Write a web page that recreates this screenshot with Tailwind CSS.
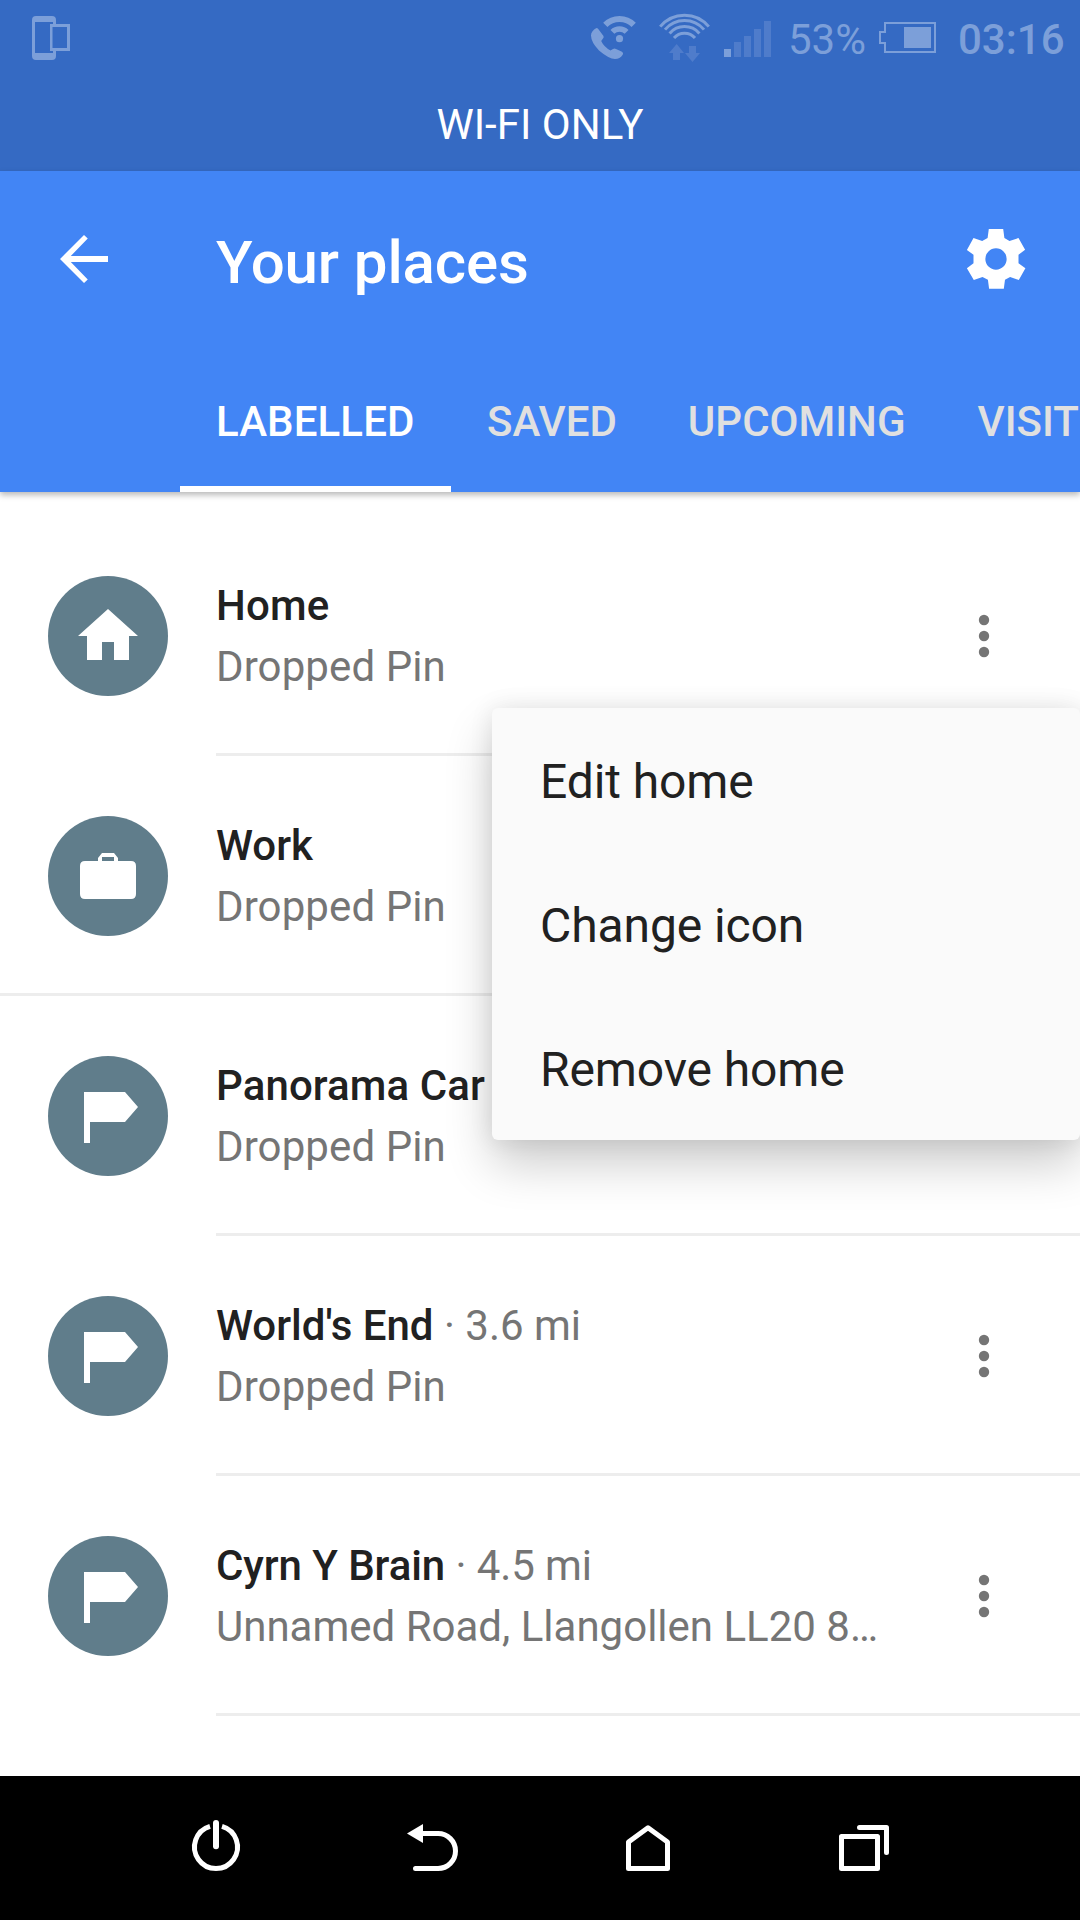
<!DOCTYPE html>
<html lang="en">
<head>
<meta charset="utf-8">
<title>Your places</title>
<script src="https://cdn.jsdelivr.net/npm/@tailwindcss/browser@4"></script>
</head>
<body class="bg-white">
<svg class="hidden">
  <symbol id="flag" viewBox="0 0 72 72"><path d="M12 12H53L66 27L53 42H18V63H12Z"/></symbol>
  <symbol id="more" viewBox="0 0 24 48"><circle cx="12" cy="8" r="5.2"/><circle cx="12" cy="24" r="5.2"/><circle cx="12" cy="40" r="5.2"/></symbol>
</svg>
<div class="relative flex h-[1920px] w-[1080px] flex-col overflow-hidden bg-white font-['Roboto',sans-serif] text-[42px] text-[#212121]">

  <!-- Status bar -->
  <div class="h-[171px] shrink-0 bg-[#356ac3] text-[#7c9fd9]">
    <div class="flex h-[76px] items-center">
      <svg class="ml-[32px] h-[76px] w-[38px]" viewBox="32 0 38 76" fill="currentColor">
        <path fill-rule="evenodd" d="M36 16H52Q56 16 56 20V24H70V51H56V56Q56 60 52 60H36Q32 60 32 56V20Q32 16 36 16ZM35 22V53H53V51H50V24H53V22ZM52.5 27V48H67V27Z"/>
      </svg>
      <svg class="ml-[517px] h-[76px] w-[49px]" viewBox="587 0 49 76" fill="none" stroke="currentColor">
        <path d="M605.3 24.9A20 20 0 0 1 633.7 24.9" stroke-width="6"/>
        <path d="M612.4 31.9A10 10 0 0 1 626.6 31.9" stroke-width="5.4"/>
        <circle cx="619.5" cy="38.7" r="3.6" fill="currentColor" stroke="none"/>
        <path d="M596.5 28Q598 28 599 30L603.5 36Q604 37.5 603 38.5L601.2 41Q604 47 610.5 50.5L613 49Q614.500 48.200 616 49L621.500 51.500Q624 53 622.500 55Q620 59 615 59Q609 59 599 50.500Q591 42 591 35.500Q591 31 596.500 28Z" fill="currentColor" stroke="none"/>
      </svg>
      <svg class="ml-[23px] h-[76px] w-[51px]" viewBox="659 0 51 76" fill="none">
        <g stroke="currentColor" stroke-width="3">
          <path d="M660.200 26.600A31.500 31.500 0 0 1 708.800 26.600"/>
          <path d="M665 29.600A25.500 25.500 0 0 1 704 29.600"/>
          <path d="M669.600 33.500A19.500 19.500 0 0 1 699.400 33.500"/>
          <path d="M674 38A13.800 13.800 0 0 1 695 38"/>
        </g>
        <path d="M676.700 44L684 53H680V60H673V53H669ZM689 46H696V53H700L692.500 62L685 53H689Z" fill="#4f7ccb"/>
      </svg>
      <svg class="ml-[14px] h-[76px] w-[47px]" viewBox="724 0 47 76">
        <path d="M724 49h7v8h-7z" fill="currentColor"/>
        <path d="M734 42h7v15h-7zM744 36h7v21h-7zM754 29h7v28h-7zM764 21h7v36h-7z" fill="#4f7ccb"/>
      </svg>
      <span class="ml-[17px] w-[91px] pt-[3px] leading-[49px]">53%</span>
      <svg class="h-[76px] w-[57px]" viewBox="879 0 57 76">
        <path d="M885 23H935V52H885V43H880V32H885Z" fill="none" stroke="currentColor" stroke-width="2"/>
        <path d="M904 27h27v21h-27z" fill="currentColor"/>
      </svg>
      <span class="ml-[22px] pt-[3px] font-medium leading-[49px]">03:16</span>
    </div>
    <div class="pt-[24px] text-center leading-[50px] text-white">WI-FI ONLY</div>
  </div>

  <!-- App bar with tabs -->
  <header class="z-10 flex h-[321px] shrink-0 flex-col justify-between bg-[#4285f5] text-white shadow-[0_3px_6px_rgba(0,0,0,0.28)]">
    <div class="flex h-[176px] items-center">
      <svg class="ml-[48px] size-[72px]" viewBox="0 0 24 24" fill="currentColor"><path d="M20 11H7.600L13.250 5.200 12 4 4 12 12 20 13.250 18.800 7.600 13H20Z"/></svg>
      <h1 class="ml-[96px] flex-1 pt-[7px] text-[60px] font-medium leading-[70px] tracking-[-0.1px]">Your places</h1>
      <svg class="mr-[48px] size-[72px]" viewBox="0 0 24 24" fill="currentColor"><path fill-rule="evenodd" d="M9.600 2H14.400L14.800 5L16.500 6L19.500 5L21.700 8.900L19.500 10.600V13.400L21.800 15.100L19.600 19L16.700 18L15 18.900L14.600 21.900H9.700L9.300 18.900L7.500 18L4.600 19L2.300 15.100L4.500 13.400V10.600L2.300 9L4.500 5L7.400 6L9.200 5ZM12 8.450A3.550 3.550 0 1 0 12 15.550A3.550 3.550 0 1 0 12 8.450Z"/></svg>
    </div>
    <nav class="flex h-[145px] pl-[180px] font-medium leading-[49px] text-[#e0e0e0]">
      <div class="w-[271px] shrink-0 border-b-[6px] border-white px-[36px] pt-[50px] tracking-[0.1px] text-white">LABELLED</div>
      <div class="-mr-px shrink-0 px-[36px] pt-[50px]">SAVED</div>
      <div class="shrink-0 px-[36px] pt-[50px]">UPCOMING</div>
      <div class="shrink-0 pl-[36px] pt-[50px]">VISIT</div>
    </nav>
  </header>

  <!-- Places -->
  <main class="flex flex-1 flex-col pt-[24px] leading-[61px]">
    <div class="flex h-[240px] shrink-0">
      <div class="w-[216px] pt-[60px] pl-[48px]"><div class="flex size-[120px] items-center justify-center rounded-full bg-[#607d8b]">
        <svg class="size-[72px]" viewBox="0 0 24 24" fill="white"><path d="M10 20v-6h4v6h5v-8h3L12 3 2 12h3v8z"/></svg></div></div>
      <div class="flex flex-1 justify-between border-b-[3px] border-[#ededed] pt-[59px]">
        <div><div class="font-medium tracking-[0.2px]">Home</div><div class="tracking-[0.1px] text-[#757575]">Dropped Pin</div></div>
        <svg class="mt-[37px] mr-[84px] h-[48px] w-[24px]" fill="#757575"><use href="#more"/></svg>
      </div>
    </div>
    <div class="flex h-[240px] shrink-0">
      <div class="w-[216px] border-b-[3px] border-[#ededed] pt-[60px] pl-[48px]"><div class="flex size-[120px] items-center justify-center rounded-full bg-[#607d8b]">
        <svg class="size-[72px]" viewBox="0 0 72 72" fill="white"><path fill-rule="evenodd" d="M13 21H26V18L30 13H42L46 18V21H59Q64 21 64 26V54Q64 59 59 59H13Q8 59 8 54V26Q8 21 13 21ZM30 17V21H42V17Z"/></svg></div></div>
      <div class="flex flex-1 justify-between border-b-[3px] border-[#ededed] pt-[59px]">
        <div><div class="font-medium">Work</div><div class="tracking-[0.1px] text-[#757575]">Dropped Pin</div></div>
        <svg class="mt-[37px] mr-[84px] h-[48px] w-[24px]" fill="#757575"><use href="#more"/></svg>
      </div>
    </div>
    <div class="flex h-[240px] shrink-0">
      <div class="w-[216px] pt-[60px] pl-[48px]"><div class="flex size-[120px] items-center justify-center rounded-full bg-[#607d8b]">
        <svg class="size-[72px]" fill="white"><use href="#flag"/></svg></div></div>
      <div class="flex flex-1 justify-between border-b-[3px] border-[#ededed] pt-[59px]">
        <div><div class="font-medium tracking-[0.1px]">Panorama Car</div><div class="tracking-[0.1px] text-[#757575]">Dropped Pin</div></div>
        <svg class="mt-[37px] mr-[84px] h-[48px] w-[24px]" fill="#757575"><use href="#more"/></svg>
      </div>
    </div>
    <div class="flex h-[240px] shrink-0">
      <div class="w-[216px] pt-[60px] pl-[48px]"><div class="flex size-[120px] items-center justify-center rounded-full bg-[#607d8b]">
        <svg class="size-[72px]" fill="white"><use href="#flag"/></svg></div></div>
      <div class="flex flex-1 justify-between border-b-[3px] border-[#ededed] pt-[59px]">
        <div class="text-[#757575]"><div><span class="font-medium text-[#212121]">World's End</span> · 3.6 mi</div><div class="tracking-[0.1px]">Dropped Pin</div></div>
        <svg class="mt-[37px] mr-[84px] h-[48px] w-[24px]" fill="#757575"><use href="#more"/></svg>
      </div>
    </div>
    <div class="flex h-[240px] shrink-0">
      <div class="w-[216px] pt-[60px] pl-[48px]"><div class="flex size-[120px] items-center justify-center rounded-full bg-[#607d8b]">
        <svg class="size-[72px]" fill="white"><use href="#flag"/></svg></div></div>
      <div class="flex flex-1 justify-between border-b-[3px] border-[#ededed] pt-[59px]">
        <div class="text-[#757575]"><div class="tracking-[-0.08px]"><span class="font-medium text-[#212121]">Cyrn Y Brain</span> · 4.5 mi</div><div>Unnamed Road, Llangollen LL20 8…</div></div>
        <svg class="mt-[37px] mr-[84px] h-[48px] w-[24px]" fill="#757575"><use href="#more"/></svg>
      </div>
    </div>
  </main>

  <!-- Navigation bar -->
  <footer class="z-10 grid h-[144px] shrink-0 grid-cols-4 place-items-center bg-black px-[108px]">
    <svg class="size-[72px]" viewBox="180 1812 72 72" fill="none" stroke="white" stroke-width="5"><path d="M210 1826.350A21.500 21.500 0 1 0 222 1826.350"/><path d="M216 1823V1846.200" stroke-width="6" stroke-linecap="round"/></svg>
    <svg class="size-[72px]" viewBox="396 1812 72 72" fill="none" stroke="white" stroke-width="5" stroke-linecap="round"><path d="M421 1833.500H438A17.500 17.500 0 0 1 438 1868.500H415.500"/><path d="M407 1833.500L423 1824V1843Z" fill="white" stroke="none"/></svg>
    <svg class="size-[72px]" viewBox="612 1812 72 72" fill="none" stroke="white" stroke-width="5" stroke-linejoin="round"><path d="M628.500 1842L648 1827.800L667.500 1842V1868.500H628.500Z"/></svg>
    <svg class="size-[72px]" viewBox="828 1812 72 72" fill="none" stroke="white" stroke-width="5" stroke-linejoin="round" stroke-linecap="round"><path d="M841.500 1836.500H877.500V1868.500H841.500Z"/><path d="M859.500 1827.500H886.500V1852.500"/></svg>
  </footer>

  <!-- Context menu -->
  <div class="absolute top-[708px] right-0 flex h-[432px] w-[588px] flex-col rounded-[6px] bg-[#fafafa] text-[48px] tracking-[-0.1px] shadow-[0_24px_48px_rgba(0,0,0,0.2),0_0_24px_rgba(0,0,0,0.09)]">
    <div class="flex h-[144px] items-center pl-[48px] pt-[3px]">Edit home</div>
    <div class="flex h-[144px] items-center pl-[48px] pt-[3px]">Change icon</div>
    <div class="flex h-[144px] items-center pl-[48px] pt-[3px]">Remove home</div>
  </div>
</div>
</body>
</html>
